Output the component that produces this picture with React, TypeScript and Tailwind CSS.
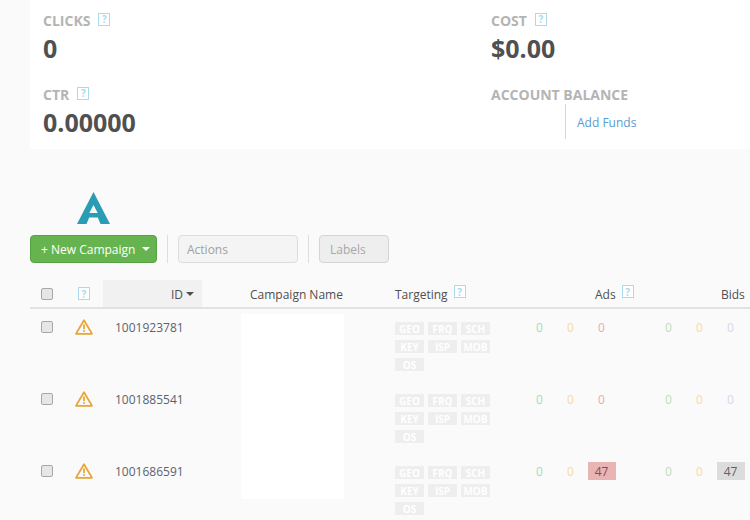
const font = { fontFamily: '"Open Sans", "Liberation Sans", sans-serif' };

function Help({ className = "" }: { className?: string }) {
  return (
    <span className={"inline-flex h-[13px] w-3 shrink-0 items-center justify-center border border-[#a9daef] bg-white text-[10px] leading-none font-bold text-[#a9daef] " + className}>
      ?
    </span>
  );
}

function Stat({ label, value }: { label: string; value: string }) {
  return (
    <div className="h-[74px]">
      <div className="flex h-[20px] items-center gap-2 text-[14px] leading-[20px] font-bold text-[#b4b4b4]">
        <span>{label}</span>
        <Help className="-mt-1" />
      </div>
      <div className="h-[34px] text-[25px] leading-[34px] font-bold text-[#505050]">{value}</div>
    </div>
  );
}

function Box() {
  return <span className="block h-3 w-3 rounded-[2px] border border-[#a8a8a8] bg-[#e6e6e6]" />;
}

function Warn() {
  return (
    <svg width="18" height="16" viewBox="0 0 18 16" fill="none">
      <path d="M9 1.2 L17 14.8 H1 Z" stroke="#e8a435" strokeWidth="1.7" strokeLinejoin="round" />
      <rect x="8.2" y="5.4" width="1.7" height="4.8" fill="#e8a435" />
      <rect x="8.2" y="11.2" width="1.7" height="1.7" fill="#e8a435" />
    </svg>
  );
}

const chips = ["GEO", "FRQ", "SCH", "KEY", "ISP", "MOB", "OS"];

function Num({ v, color, bg }: { v: string; color: string; bg?: string }) {
  return (
    <div className="flex w-[31px] justify-center">
      <span className={"flex h-[18px] items-center justify-center pt-[2px] text-[12px] leading-[18px] " + color + " " + (bg ?? "")}>{v}</span>
    </div>
  );
}

function Row({ id, ads, bids, bidColor }: { id: string; ads: string; bids: string; bidColor: string }) {
  const hit = ads === "47";
  return (
    <div className="flex h-[72px] pt-[3px]">
      <div className="flex h-[18px] w-[47px] items-center pl-[11px]"><Box /></div>
      <div className="-ml-[2px] flex h-[18px] w-[27px] items-center"><Warn /></div>
      <div className="ml-[12px] h-[18px] w-[281px] pt-[1px] pl-[1px] text-[12px] leading-[18px] text-[#5a6270]">{id}</div>
      <div className="grid h-fit w-[95px] grid-cols-[29px_29px_29px] gap-x-[4px] gap-y-[5px] pt-[4px]">
        {chips.map((c) => (
          <span key={c} className="flex h-[13px] items-center justify-center bg-[#eeeeee] text-[10px] leading-none font-bold text-white">{c}</span>
        ))}
      </div>
      <div className="ml-[34px] flex">
        <Num v="0" color="text-[#a8dcb8]" />
        <Num v="0" color="text-[#fad9a0]" />
        {hit ? (
          <Num v="47" color="w-[28px] text-[#8a4a55]" bg="bg-[#e8b4b4]" />
        ) : (
          <Num v="0" color="text-[#f0a8b0]" />
        )}
      </div>
      <div className="ml-[36px] flex">
        <Num v="0" color="text-[#bce0ae]" />
        <Num v="0" color="text-[#fad9a0]" />
        {hit ? (
          <Num v={bids} color="w-[28px] text-[#5f5f68]" bg="bg-[#dcdcdc]" />
        ) : (
          <Num v={bids} color={bidColor} />
        )}
      </div>
    </div>
  );
}

export default function App() {
  return (
    <div style={font} className="h-[520px] w-[750px] overflow-hidden bg-[#fafafa] pl-[30px]">
      <div className="grid h-[149px] grid-cols-[448px_1fr] bg-white pt-[11px] pl-[13px]">
        <div>
          <Stat label="CLICKS" value="0" />
          <Stat label="CTR" value="0.00000" />
        </div>
        <div>
          <Stat label="COST" value="$0.00" />
          <div className="flex h-[19px] items-center text-[14px] leading-[20px] font-bold text-[#b4b4b4]">ACCOUNT BALANCE</div>
          <div className="ml-[74px] flex h-[35px] items-center border-l border-[#d6d6d6] pt-[2px] pl-[11px] text-[12px] text-[#5a9bd0]">Add Funds</div>
        </div>
      </div>

      <div className="flex h-[86px] items-end pb-[11px] pl-[47px]">
        <svg width="33" height="32" viewBox="0 0 33 32">
          <path fillRule="evenodd" fill="#2a9db5" d="M16.5 0 L33 32 H23.5 L20.8 25.5 H12.2 L9.5 32 H0 Z M16.5 13 L12.3 21 H20.7 Z" />
        </svg>
      </div>

      <div className="flex h-[28px] items-center">
        <button className="flex h-[28px] w-[127px] items-center gap-[7px] rounded-[4px] border border-[#57a147] bg-[#65b44f] pl-[10px] text-[12px] text-white">
          <span className="mt-[2px]">+ New Campaign</span>
          <span className="h-0 w-0 border-x-[4px] border-t-[4px] border-x-transparent border-t-white" />
        </button>
        <div className="mx-[10px] h-[28px] w-px bg-[#dedede]" />
        <div className="flex h-[28px] w-[120px] items-center rounded-[4px] border border-[#dddddd] bg-[#f4f4f4] pt-[2px] pl-[8px] text-[12px] text-[#a0a0a0]">Actions</div>
        <div className="mx-[10px] h-[28px] w-px bg-[#dedede]" />
        <div className="flex h-[28px] w-[70px] items-center rounded-[4px] border border-[#d4d4d4] bg-[#eeeeee] pt-[2px] pl-[10px] text-[12px] text-[#a8a8a8]">Labels</div>
      </div>

      <div className="relative mt-[17px]">
        <div className="flex h-[29px] items-center border-b-2 border-[#e2e2e2] text-[12px] text-[#4f4f4f]">
          <div className="flex w-[47px] pl-[11px]"><Box /></div>
          <div className="flex w-[26px]"><Help className="ml-[1px]" /></div>
          <div className="flex h-full w-[99px] items-center justify-end gap-[3px] bg-[#f1f1f1] pr-[8px]">
            <span className="mt-[2px]">ID</span>
            <span className="h-0 w-0 border-x-[4px] border-t-[4px] border-x-transparent border-t-[#4f4f4f]" />
          </div>
          <div className="mt-[2px] ml-[48px] w-[145px]">Campaign Name</div>
          <div className="flex w-[200px] items-center gap-[6px]"><span className="mt-[2px]">Targeting</span><Help className="-mt-1" /></div>
          <div className="flex w-[126px] items-center gap-[6px]"><span className="mt-[2px]">Ads</span><Help className="-mt-1" /></div>
          <div className="mt-[2px]">Bids</div>
        </div>
        <div className="pt-[6px]">
          <Row id="1001923781" ads="0" bids="0" bidColor="text-[#d4d8ea]" />
          <Row id="1001885541" ads="0" bids="0" bidColor="text-[#d4d8ea]" />
          <Row id="1001686591" ads="47" bids="47" bidColor="" />
        </div>
        <div className="absolute top-[34px] left-[211px] h-[185px] w-[103px] bg-white" />
      </div>
    </div>
  );
}
